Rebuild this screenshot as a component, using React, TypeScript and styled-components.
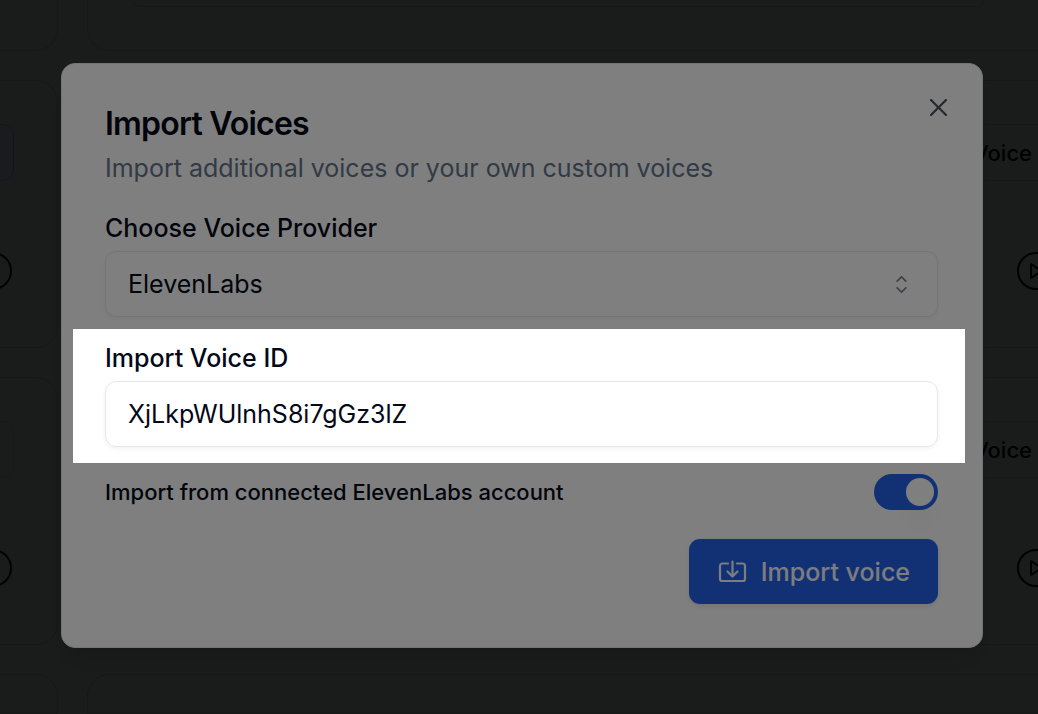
import React from "react";
import styled, { createGlobalStyle } from "styled-components";
import { RxCaretSort, RxCross2 } from "react-icons/rx";

const GlobalStyle = createGlobalStyle`
  *, *::before, *::after { box-sizing: border-box; }
  body {
    margin: 0;
    background: #353937;
    color: #020817;
    font-family: Inter, "Liberation Sans", sans-serif;
    font-size: 25px;
  }
  button, input, select { font: inherit; color: inherit; }
`;

const Page = styled.div`
  position: relative;
  min-height: 100vh;
  overflow: hidden;
`;

/* Voice cards that stay visible behind the modal */
const Backdrop = styled.div`
  position: absolute;
  inset: 0 -40px 0 -60px;
  display: grid;
  grid-template-columns: 118px 1fr;
  grid-template-rows: 51px 268px 268px 1fr;
  gap: 29px;
  color: #000;
`;

const Card = styled.section<{ $edge?: "top" | "bottom" }>`
  display: flex;
  flex-direction: column;
  align-items: flex-end;
  gap: 71px;
  padding-top: ${(p) => (p.$edge ? 0 : 43)}px;
  border: 1px solid #2c302e;
  border-radius: ${(p) =>
    p.$edge === "top" ? "0 0 22px 22px" : p.$edge === "bottom" ? "22px 22px 0 0" : "22px"};
  border-top-width: ${(p) => (p.$edge === "top" ? 0 : 1)}px;
`;

const PreviewBox = styled.div`
  width: calc(100% - 138px);
  height: 7px;
  margin: 0 93px 0 45px;
  border: 1px solid #2c302e;
  border-top: 0;
  border-radius: 0 0 11px 11px;
`;

const Tag = styled.div<{ $side: "left" | "right"; $active?: boolean }>`
  display: flex;
  align-items: center;
  justify-content: flex-end;
  width: ${(p) => (p.$side === "left" ? "70px" : "280px")};
  height: 57px;
  margin-right: ${(p) => (p.$side === "left" ? 43 : 0)}px;
  padding-right: 44px;
  border: 1px solid ${(p) => (p.$active ? "#262a3c" : "#2f3331")};
  border-radius: 11px;
  background: ${(p) => (p.$active ? "#33363e" : "transparent")};
  font-size: 22px;
  font-weight: 500;
`;

const PlayButton = styled.button<{ $side: "left" | "right" }>`
  display: grid;
  place-items: center;
  width: 38px;
  height: 38px;
  margin-right: ${(p) => (p.$side === "left" ? 45 : 22)}px;
  padding: 0;
  border: 2px solid #000;
  border-radius: 50%;
  background: none;
`;

const Stage = styled.main`
  position: relative;
  padding: 63px 55px 66px 61px;
`;

const Dialog = styled.div`
  position: relative;
  display: flex;
  flex-direction: column;
  padding: 44px 44px 43px 43px;
  border: 1px solid #e2e8f0;
  border-radius: 14px;
  background: #fff;
  box-shadow: 0 18px 27px -5px rgba(0, 0, 0, 0.1), 0 7px 11px -7px rgba(0, 0, 0, 0.1);
`;

const Header = styled.header`
  display: flex;
  flex-direction: column;
  gap: 10px;
  margin-bottom: 29px;
`;

const Title = styled.h2`
  margin: 0;
  font-size: 32px;
  line-height: 32px;
  font-weight: 600;
  letter-spacing: -0.025em;
`;

const Description = styled.p`
  margin: 0;
  line-height: 36px;
  color: #64748b;
`;

const CloseButton = styled.button`
  position: absolute;
  top: 29px;
  right: 29px;
  display: flex;
  padding: 0;
  border: 0;
  background: none;
  opacity: 0.7;
`;

const Field = styled.div`
  display: flex;
  flex-direction: column;
  gap: 10px;
`;

/* The field in focus: its shadow dims everything around it */
const Spotlight = styled(Field)`
  position: relative;
  z-index: 1;
  margin: 12px -27px 11px -32px;
  padding: 16px 27px 16px 32px;
  background: #fff;
  box-shadow: 0 0 0 200vmax rgba(0, 0, 0, 0.5);
`;

const Label = styled.label`
  line-height: 26px;
  font-weight: 500;
`;

const control = `
  width: 100%;
  height: 66px;
  padding: 0 22px;
  border: 1px solid #e2e8f0;
  border-radius: 11px;
  background: transparent;
  box-shadow: 0 2px 4px rgba(0, 0, 0, 0.05);
  outline: 0;
`;

const SelectWrap = styled.div`
  display: grid;
  align-items: center;
  & > * { grid-area: 1 / 1; }
  & > svg {
    justify-self: end;
    margin-right: 22px;
    opacity: 0.5;
    pointer-events: none;
  }
`;

const Select = styled.select`
  ${control}
  appearance: none;
`;

const TextInput = styled.input`
  ${control}
`;

const ToggleRow = styled.div`
  display: flex;
  align-items: center;
  justify-content: space-between;
  height: 36px;
`;

const ToggleLabel = styled.label`
  font-size: 22px;
  font-weight: 500;
`;

const Switch = styled.input`
  appearance: none;
  display: flex;
  align-items: center;
  width: 64px;
  height: 36px;
  margin: 0;
  padding: 0 4px;
  border-radius: 18px;
  background: #cbd5e1;
  &::before {
    content: "";
    width: 28px;
    height: 28px;
    border-radius: 50%;
    background: #fff;
    box-shadow: 0 18px 27px -5px rgba(0, 0, 0, 0.1);
  }
  &:checked {
    justify-content: flex-end;
    background: #2563eb;
  }
`;

const Footer = styled.footer`
  display: flex;
  justify-content: flex-end;
  margin-top: 29px;
`;

const PrimaryButton = styled.button`
  display: flex;
  align-items: center;
  gap: 14px;
  height: 65px;
  padding: 0 28px 0 29px;
  border: 0;
  border-radius: 11px;
  background: #2563eb;
  box-shadow: 0 2px 5px rgba(0, 0, 0, 0.1);
  color: #f8fafc;
  font-weight: 500;
`;

const PlayIcon = () => (
  <svg width="18" height="20" viewBox="0 0 18 20" fill="none" stroke="#000" strokeWidth="2" strokeLinejoin="round">
    <path d="M4 3v14l11-7z" />
  </svg>
);

const ImportIcon = () => (
  <svg
    width="29"
    height="24"
    viewBox="0 0 29 24"
    fill="none"
    stroke="currentColor"
    strokeWidth="2.2"
    strokeLinecap="round"
    strokeLinejoin="round"
  >
    <path d="M10 3.500H4.500a2.500 2.500 0 0 0-2.500 2.500v13a2 2 0 0 0 2 2h21a2 2 0 0 0 2-2v-13a2.500 2.500 0 0 0-2.500-2.500H19" />
    <path d="M14.500 1.500v14.500M9.500 11.500l5 5 5-5" />
  </svg>
);

function VoiceRow({ active }: { active?: boolean }) {
  return (
    <>
      <Card>
        <Tag $side="left" $active={active} />
        <PlayButton $side="left" aria-label="Play voice">
          <PlayIcon />
        </PlayButton>
      </Card>
      <Card>
        <Tag $side="right">Voice</Tag>
        <PlayButton $side="right" aria-label="Play voice">
          <PlayIcon />
        </PlayButton>
      </Card>
    </>
  );
}

export default function App() {
  return (
    <Page>
      <GlobalStyle />
      <Backdrop aria-hidden="true">
        <Card $edge="top" />
        <Card $edge="top">
          <PreviewBox />
        </Card>
        <VoiceRow active />
        <VoiceRow />
        <Card $edge="bottom" />
        <Card $edge="bottom" />
      </Backdrop>
      <Stage>
        <Dialog role="dialog" aria-labelledby="dialog-title">
          <Header>
            <Title id="dialog-title">Import Voices</Title>
            <Description>Import additional voices or your own custom voices</Description>
          </Header>
          <Field>
            <Label htmlFor="provider">Choose Voice Provider</Label>
            <SelectWrap>
              <Select id="provider" defaultValue="elevenlabs">
                <option value="elevenlabs">ElevenLabs</option>
              </Select>
              <RxCaretSort size={29} />
            </SelectWrap>
          </Field>
          <Spotlight>
            <Label htmlFor="voice-id">Import Voice ID</Label>
            <TextInput id="voice-id" type="text" defaultValue="XjLkpWUlnhS8i7gGz3lZ" spellCheck={false} />
          </Spotlight>
          <ToggleRow>
            <ToggleLabel htmlFor="connected">Import from connected ElevenLabs account</ToggleLabel>
            <Switch id="connected" type="checkbox" defaultChecked />
          </ToggleRow>
          <Footer>
            <PrimaryButton type="button">
              <ImportIcon />
              Import voice
            </PrimaryButton>
          </Footer>
          <CloseButton type="button" aria-label="Close">
            <RxCross2 size={29} />
          </CloseButton>
        </Dialog>
      </Stage>
    </Page>
  );
}
